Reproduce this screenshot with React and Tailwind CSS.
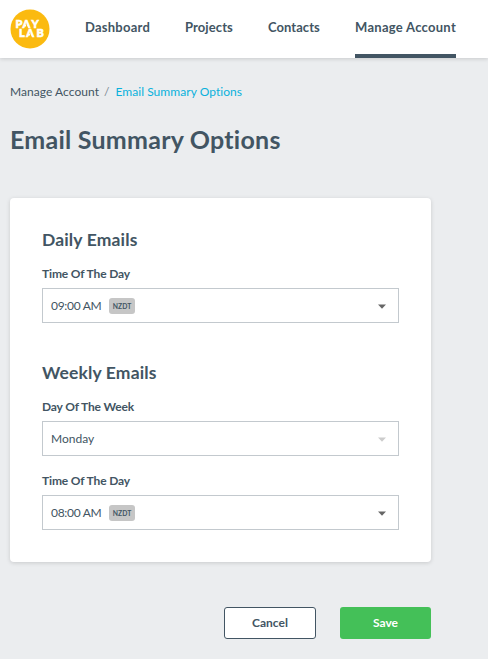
import React from 'react';

const navItems = [
  { label: 'Dashboard', width: 'w-[65px]', tracking: 'tracking-[0.25px]' },
  { label: 'Projects', width: 'w-[48px]', tracking: 'tracking-[0.1px]' },
  { label: 'Contacts', width: 'w-[52px]', tracking: 'tracking-[0.05px]' },
  { label: 'Manage Account', width: 'w-[101px]', tracking: 'tracking-[0.28px]', active: true },
];

function Logo() {
  return (
    <svg className="mt-[9px] h-10 w-10 shrink-0" viewBox="0 0 40 40" aria-label="PayLab">
      <circle cx="20" cy="20" r="19.5" fill="#fbba10" />
      <text fill="#fff" stroke="#fff" strokeWidth="0.6" fontFamily="Lato, sans-serif" fontWeight="900" fontSize="11">
        <tspan x="5.4 12.4 21.4" y="19">PAY</tspan>
        <tspan x="9 16.2 26.6" y="28.4">LAB</tspan>
      </text>
      {/* open up the crossbars of both A's */}
      <path d="M16.6 15l1.6 5h-3.2zM20.4 24.4l1.6 5h-3.2z" fill="#fbba10" />
    </svg>
  );
}

function SelectField({ label, value, zone, disabled }) {
  return (
    <div>
      <div className="h-[18px] text-[12px] leading-[18px] font-bold tracking-[-0.15px]">{label}</div>
      <button
        type="button"
        disabled={disabled}
        className="mt-[5px] flex h-[35px] w-full items-center border border-[#c3c9ce] bg-white pl-2 pr-[12px] text-left"
      >
        <span className={`mt-px text-[12px] leading-5 ${zone ? 'w-[50px] tracking-[-0.3px] whitespace-nowrap' : ''}`}>{value}</span>
        {zone && (
          <span className="ml-2 flex h-4 w-[26px] items-center justify-center rounded-[3px] bg-[#c6c6c6] pt-px text-[6.8px] font-bold">
            {zone}
          </span>
        )}
        <svg className="mt-0.5 ml-auto h-[5px] w-2" viewBox="0 0 8 5">
          <path d="M0 0.5h8L4 4.7z" fill={disabled ? '#cccccc' : '#666666'} />
        </svg>
      </button>
    </div>
  );
}

export default function App() {
  return (
    <div className="h-[659px] w-[488px] overflow-hidden bg-[#ebedef] font-['Lato',sans-serif] text-[#425563]">
      <header className="flex h-[58px] bg-white pl-[10px] shadow-[0_1px_4px_rgba(0,0,0,0.15)]">
        <Logo />
        <nav className="ml-[35px] flex gap-[35px]">
          {navItems.map((item) => (
            <a
              key={item.label}
              className={`${item.width} ${item.tracking} h-[58px] pt-[17px] text-[13px] leading-5 font-bold whitespace-nowrap ${
                item.active ? 'border-b-4 border-[#425563]' : ''
              }`}
            >
              {item.label}
            </a>
          ))}
        </nav>
      </header>

      <main className="w-[431px] pl-[10px]">
        <div className="flex h-5 pt-6 text-[12px] leading-5 whitespace-nowrap">
          <span className="tracking-[0.05px]">Manage Account</span>
          <span className="mr-[6px] ml-[5px] text-[#7d8992]">/</span>
          <span className="tracking-[0.05px] text-[#09b1dc]">Email Summary Options</span>
        </div>
        <h1 className="mt-[39px] h-9 text-[25px] leading-9 font-bold tracking-[0.24px] whitespace-nowrap">Email Summary Options</h1>

        <section className="mt-[41px] h-[364px] rounded-[4px] bg-white px-8 pt-[30px] shadow-[0_1px_4px_rgba(0,0,0,0.15)]">
          <h2 className="h-6 text-[17.5px] leading-6 font-bold tracking-[0.15px]">Daily Emails</h2>
          <div className="mt-[13px]">
            <SelectField label="Time Of The Day" value="09:00 AM" zone="NZDT" />
          </div>

          <h2 className="mt-[38px] h-6 text-[17.5px] leading-6 font-bold tracking-[0.15px]">Weekly Emails</h2>
          <div className="mt-[13px] flex flex-col gap-[16px]">
            <SelectField label="Day Of The Week" value="Monday" disabled />
            <SelectField label="Time Of The Day" value="08:00 AM" zone="NZDT" />
          </div>
        </section>

        <div className="mt-[45px] flex justify-end gap-6 text-[12px] font-bold">
          <button type="button" className="h-8 w-[92px] rounded-[3px] border border-[#425563] bg-white">Cancel</button>
          <button type="button" className="h-8 w-[91px] rounded-[3px] bg-[#44c058] text-white">Save</button>
        </div>
      </main>
    </div>
  );
}
